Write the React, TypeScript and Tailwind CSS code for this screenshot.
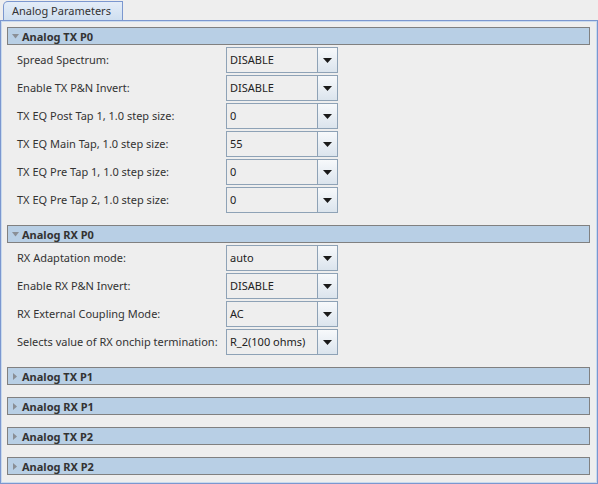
import React from 'react';

type Row = { label: string; value: string };

const txP0: Row[] = [
  { label: 'Spread Spectrum:', value: 'DISABLE' },
  { label: 'Enable TX P&N Invert:', value: 'DISABLE' },
  { label: 'TX EQ Post Tap 1, 1.0 step size:', value: '0' },
  { label: 'TX EQ Main Tap, 1.0 step size:', value: '55' },
  { label: 'TX EQ Pre Tap 1, 1.0 step size:', value: '0' },
  { label: 'TX EQ Pre Tap 2, 1.0 step size:', value: '0' },
];

const rxP0: Row[] = [
  { label: 'RX Adaptation mode:', value: 'auto' },
  { label: 'Enable RX P&N Invert:', value: 'DISABLE' },
  { label: 'RX External Coupling Mode:', value: 'AC' },
  { label: 'Selects value of RX onchip termination:', value: 'R_2(100 ohms)' },
];

const collapsed = ['Analog TX P1', 'Analog RX P1', 'Analog TX P2', 'Analog RX P2'];

function SectionHeader({ title, open }: { title: string; open: boolean }) {
  return (
    <div className="flex h-[18px] items-center border border-[#808080] bg-[#b8cfe5]">
      <div className="flex w-[14px] justify-center">
        {open ? (
          <svg width="7" height="5" viewBox="0 0 7 5">
            <path d="M0 0 L7 0 L3.5 4.5 Z" fill="#8a8f96" />
          </svg>
        ) : (
          <svg width="4" height="7" viewBox="0 0 4 7">
            <path d="M0 0 L4 3.5 L0 7 Z" fill="#8a8f96" />
          </svg>
        )}
      </div>
      <span className="text-[11px] font-bold leading-none text-[#333333]">{title}</span>
    </div>
  );
}

function Combo({ value }: { value: string }) {
  return (
    <div className="flex h-[26px] w-[112px]">
      <div className="flex flex-1 items-center border border-[#8ea2b6] bg-[#eeeeee] pl-[3px] text-[11px] text-[#222222]">
        {value}
      </div>
      <div className="flex w-[20px] items-center justify-center border border-l-0 border-[#8ea2b6] bg-gradient-to-b from-[#f7f9fb] to-[#dbe4ed]">
        <svg width="9" height="5" viewBox="0 0 9 5">
          <path d="M0 0 L9 0 L4.5 5 Z" fill="#1a1a1a" />
        </svg>
      </div>
    </div>
  );
}

function Rows({ rows }: { rows: Row[] }) {
  return (
    <div className="mt-[2px] flex flex-col gap-[2px]">
      {rows.map((r) => (
        <div key={r.label} className="flex h-[26px] items-center">
          <span className="w-[219px] pl-[10px] text-[11px] text-[#333333]">{r.label}</span>
          <Combo value={r.value} />
        </div>
      ))}
    </div>
  );
}

export default function App() {
  return (
    <div
      className="flex h-[484px] w-[598px] flex-col bg-[#eeeeee]"
      style={{ fontFamily: '"Noto Sans", "DejaVu Sans", sans-serif' }}
    >
      <div className="flex h-[20px] items-end pl-[3px]">
        <div className="flex h-[19px] w-[120px] items-center rounded-tl-[5px] border border-b-0 border-[#7b97cf] bg-gradient-to-b from-[#e4edf8] to-[#cfdff0] pl-[8px] text-[11px] text-[#333333]">
          Analog Parameters
        </div>
      </div>
      <div className="flex-1 border border-[#7b97cf]">
        <div className="h-full border border-[#c9daee] pl-[5px] pr-[6px] pt-[5px]">
          <SectionHeader title="Analog TX P0" open />
          <Rows rows={txP0} />
          <div className="mt-[12px]">
            <SectionHeader title="Analog RX P0" open />
          </div>
          <Rows rows={rxP0} />
          <div className="mt-[12px] flex flex-col gap-[12px]">
            {collapsed.map((t) => (
              <SectionHeader key={t} title={t} open={false} />
            ))}
          </div>
        </div>
      </div>
    </div>
  );
}
